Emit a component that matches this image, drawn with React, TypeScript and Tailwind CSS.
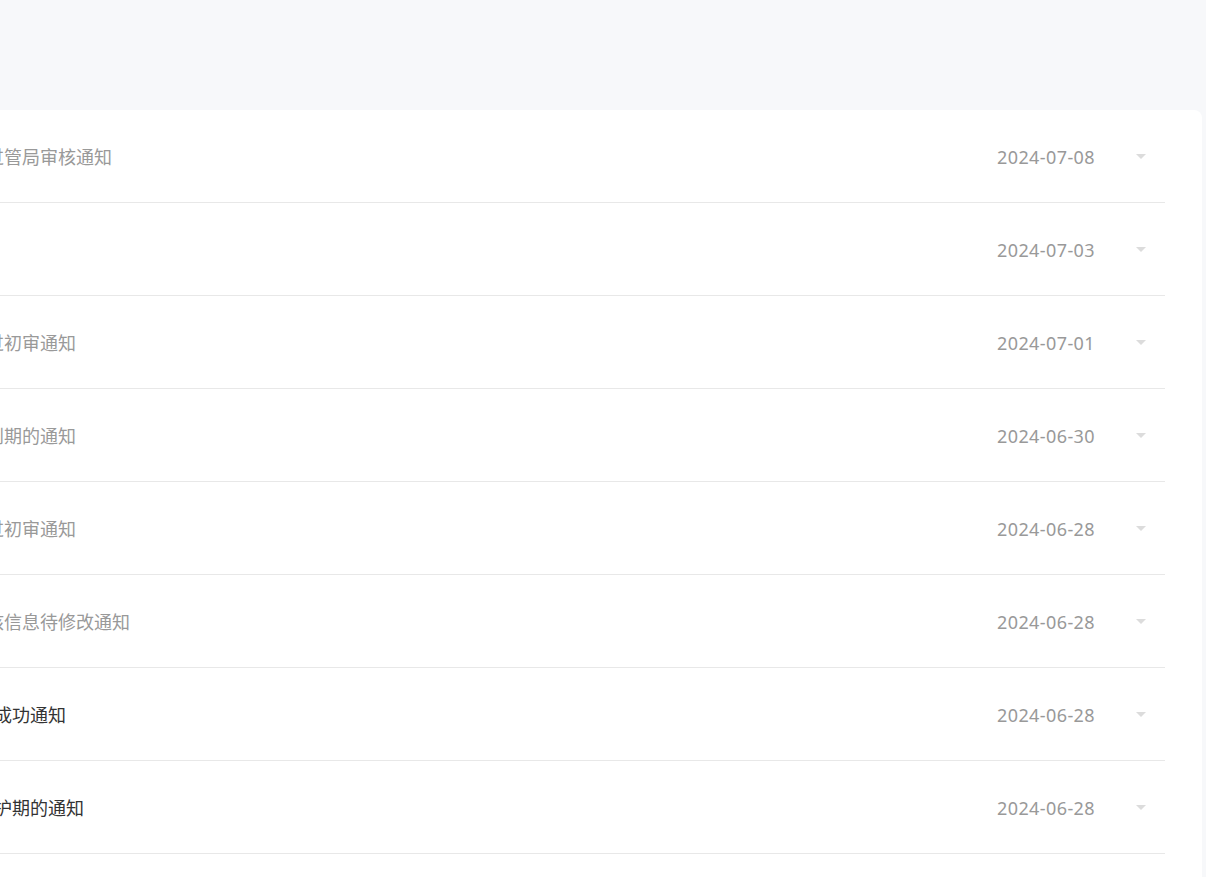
const notices = [
  { title: "网站备案已通过管局审核通知", date: "2024-07-08", read: true },
  { title: "系统通知", date: "2024-07-03", read: true },
  { title: "网站备案已通过初审通知", date: "2024-07-01", read: true },
  { title: "您的域名即将到期的通知", date: "2024-06-30", read: true },
  { title: "网站备案已通过初审通知", date: "2024-06-28", read: true },
  { title: "网站备案的审核信息待修改通知", date: "2024-06-28", read: true },
  { title: "您的域名注册成功通知", date: "2024-06-28", read: false },
  { title: "域名已进入保护期的通知", date: "2024-06-28", read: false },
  { title: "域名注册成功通知", date: "2024-06-27", read: false },
];

function Caret() {
  return (
    <svg width="10" height="6" viewBox="0 0 10 6">
      <path d="M0 0 L10 0 L5 5 Z" fill="#dcdcdc" />
    </svg>
  );
}

export default function App() {
  return (
    <div className="min-h-screen overflow-hidden bg-[#f7f8fa] font-['Noto_Sans','Noto_Sans_CJK_SC',sans-serif] text-[18px]">
      {/* page header area */}
      <div className="h-[110px]" />

      <div className="flex pr-[4px]">
        <div className="-ml-[160px] flex-1 rounded-tr-lg bg-white pl-[38px] pr-[37px]">
          {notices.map((n, i) => (
            <div key={i} className="flex h-[93px] items-center border-b border-[#e8e8e8] pt-[2px]">
              <div className="flex min-w-0 flex-1 items-center">
                {!n.read && <span className="mr-[4px] h-[4px] w-[4px] rounded-full bg-[#f5222d]" />}
                <span className={`truncate ${n.read ? "text-[#999999]" : "text-[#333333]"}`}>
                  {n.title}
                </span>
              </div>
              <span className="tracking-[0.4px] text-[#999999]">{n.date}</span>
              <div className="flex w-[70px] justify-end pr-[19px]">
                <Caret />
              </div>
            </div>
          ))}
        </div>
      </div>
    </div>
  );
}
